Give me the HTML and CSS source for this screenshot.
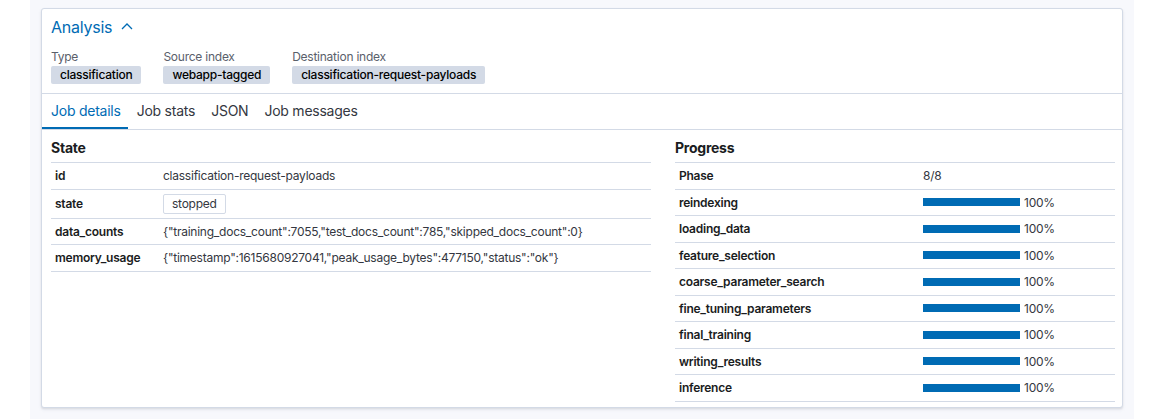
FILE: index.html
```html
<!DOCTYPE html>
<html>
<head>
<meta charset="utf-8">
<link rel="stylesheet" href="styles.css">
</head>
<body>
<div class="page">
  <div class="panel">
    <div class="header">
      <div class="title">Analysis
        <svg class="chev" width="12" height="8" viewBox="0 0 12 8"><path d="M1 7 L6 2 L11 7" fill="none" stroke="#006bb4" stroke-width="1.3"/></svg>
      </div>
      <div class="meta">
        <div class="meta-item"><div class="meta-label">Type</div><span class="badge">classification</span></div>
        <div class="meta-item"><div class="meta-label">Source index</div><span class="badge">webapp-tagged</span></div>
        <div class="meta-item"><div class="meta-label">Destination index</div><span class="badge">classification-request-payloads</span></div>
      </div>
    </div>
    <div class="tabs">
      <div class="tab active">Job details</div>
      <div class="tab">Job stats</div>
      <div class="tab">JSON</div>
      <div class="tab">Job messages</div>
    </div>
    <div class="body">
      <div class="section state">
        <div class="sec-title">State</div>
        <div class="row"><div class="k kl">id</div><div class="v">classification-request-payloads</div></div>
        <div class="row"><div class="k kl">state</div><div class="v"><span class="hollow">stopped</span></div></div>
        <div class="row"><div class="k kl">data_counts</div><div class="v">{"training_docs_count":7055,"test_docs_count":785,"skipped_docs_count":0}</div></div>
        <div class="row"><div class="k kl">memory_usage</div><div class="v">{"timestamp":1615680927041,"peak_usage_bytes":477150,"status":"ok"}</div></div>
      </div>
      <div class="section progress">
        <div class="sec-title">Progress</div>
        <div class="row"><div class="k kr">Phase</div><div class="v">8/8</div></div>
        <div class="row"><div class="k kr">reindexing</div><div class="v bar-cell"><span class="bar"></span><span class="pct">100%</span></div></div>
        <div class="row"><div class="k kr">loading_data</div><div class="v bar-cell"><span class="bar"></span><span class="pct">100%</span></div></div>
        <div class="row"><div class="k kr">feature_selection</div><div class="v bar-cell"><span class="bar"></span><span class="pct">100%</span></div></div>
        <div class="row"><div class="k kr">coarse_parameter_search</div><div class="v bar-cell"><span class="bar"></span><span class="pct">100%</span></div></div>
        <div class="row"><div class="k kr">fine_tuning_parameters</div><div class="v bar-cell"><span class="bar"></span><span class="pct">100%</span></div></div>
        <div class="row"><div class="k kr">final_training</div><div class="v bar-cell"><span class="bar"></span><span class="pct">100%</span></div></div>
        <div class="row"><div class="k kr">writing_results</div><div class="v bar-cell"><span class="bar"></span><span class="pct">100%</span></div></div>
        <div class="row"><div class="k kr">inference</div><div class="v bar-cell"><span class="bar"></span><span class="pct">100%</span></div></div>
      </div>
    </div>
  </div>
</div>
</body>
</html>
```

FILE: styles.css
```css
* { box-sizing: border-box; }
html, body { margin: 0; padding: 0; background: #ffffff; }
body {
  font-family: Inter, "Noto Sans", sans-serif;
  color: #343741;
  letter-spacing: -0.015em;
}

.page {
  margin-left: 30px;
  width: 1104px;
  height: 419px;
  background: #f7f8fc;
  padding: 8px 11px 0 11px;
}

.panel {
  background: #fff;
  border: 1px solid #d3dae6;
  border-radius: 3px;
  box-shadow: 0 1px 2px rgba(0, 0, 0, 0.08), 0 2px 3px rgba(152, 162, 179, 0.15);
  height: 400px;
}

.header {
  padding: 6px 9px 9px 9px;
  border-bottom: 1px solid #d3dae6;
}

.title {
  font-size: 16px;
  line-height: 24px;
  color: #006bb4;
  display: flex;
  align-items: center;
  gap: 9px;
}
.chev { margin-top: -2px; }

.meta {
  display: flex;
  margin-top: 10px;
  gap: 22px;
}
.meta-item {
  display: flex;
  flex-direction: column;
  align-items: flex-start;
}
.meta-label {
  font-size: 12px;
  line-height: 16px;
  color: #5a606b;
  margin-bottom: 1px;
}
.badge {
  display: block;
  background: #d3dae6;
  color: #000;
  font-size: 12px;
  font-weight: 500;
  line-height: 18px;
  padding: 0 9px;
  border-radius: 2px;
}

.tabs {
  display: flex;
  border-bottom: 1px solid #d3dae6;
}
.tab {
  font-size: 14px;
  line-height: 20px;
  padding: 7px 7px 6px 9px;
  border-bottom: 2px solid transparent;
  color: #343741;
}
.tab.active {
  color: #006bb4;
  border-bottom-color: #006bb4;
}

.body {
  display: grid;
  grid-template-columns: 600px 440px;
  column-gap: 24px;
  padding: 6px 8px 0 9px;
}

.sec-title {
  font-size: 14px;
  font-weight: 700;
  line-height: 24px;
  color: #1a1c21;
  padding-bottom: 2px;
  border-bottom: 1px solid #d3dae6;
}

.row {
  display: flex;
  align-items: center;
  border-bottom: 1px solid #d3dae6;
  font-size: 12px;
  line-height: 17.5px;
}
.k {
  padding: 4px;
  font-weight: 600;
  color: #1a1c21;
  flex: none;
}
.kl { width: 108px; }
.kr { width: 244px; }
.v {
  padding: 4px;
  color: #343741;
}

.hollow {
  display: block;
  border: 1px solid #d3dae6;
  border-radius: 2px;
  padding: 0 8px;
  line-height: 18px;
  color: #343741;
  background: #fff;
}

.bar-cell { display: flex; align-items: center; gap: 4px; }
.bar {
  display: block;
  width: 97px;
  height: 8px;
  background: #006bb4;
}
.pct { color: #343741; }
```
